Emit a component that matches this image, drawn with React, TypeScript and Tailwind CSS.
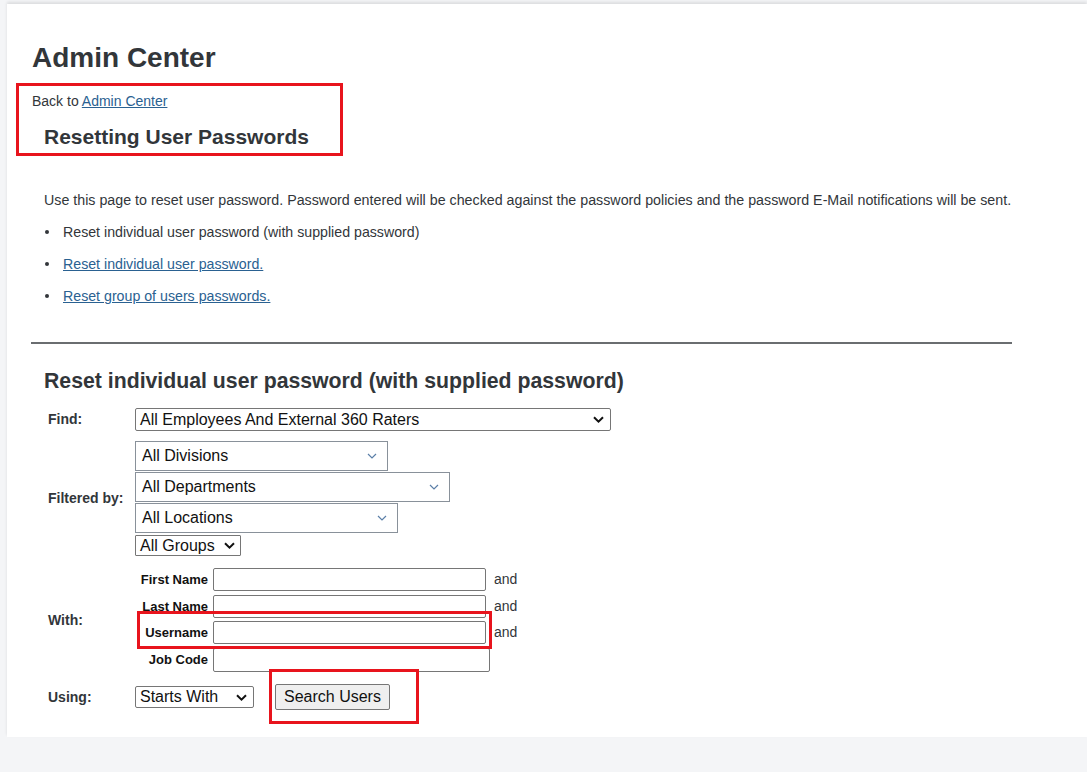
import React from 'react'

const font = { fontFamily: '"Liberation Sans", Arial, sans-serif' }

function Chevron({ light }: { light?: boolean }) {
  return light ? (
    <svg width="10" height="6" viewBox="0 0 10 6" className="shrink-0">
      <path d="M1 1 L5 5 L9 1" fill="none" stroke="#5b7fa8" strokeWidth="1.2" />
    </svg>
  ) : (
    <svg width="11" height="7" viewBox="0 0 11 7" className="shrink-0">
      <path d="M1 1.2 L5.5 5.6 L10 1.2" fill="none" stroke="#111" strokeWidth="2" />
    </svg>
  )
}

function Select({
  label,
  className,
  light,
}: {
  label: string
  className: string
  light?: boolean
}) {
  return (
    <div
      className={`flex items-center justify-between bg-white text-[16px] text-[#111] ${className}`}
    >
      <span className="whitespace-nowrap">{label}</span>
      <Chevron light={light} />
    </div>
  )
}

function Field({
  label,
  className,
  wide,
  and,
}: {
  label: string
  className?: string
  wide?: boolean
  and?: boolean
}) {
  return (
    <div className={`flex items-center ${className ?? ''}`}>
      <div className="w-[78px] pr-[5px] text-right text-[13px] font-bold text-[#111]">{label}</div>
      <div
        className={`rounded-[2px] border border-[#767676] bg-white ${wide ? 'h-[24px] w-[277px]' : 'h-[23px] w-[273px]'}`}
      />
      {and && <span className="ml-[8px] text-[14px] text-[#32363a]">and</span>}
    </div>
  )
}

function Bullet() {
  return (
    <span className="flex w-[19px] pl-[1px]">
      <span className="inline-block h-[4px] w-[4px] rounded-full bg-[#32363a]" />
    </span>
  )
}

export default function App() {
  return (
    <div className="relative h-[772px] bg-[#f4f5f7] pt-[4px] pl-[7px]" style={font}>
      <div className="bg-white pt-[38px] pb-[27px] pl-[25px] shadow-[0_-2px_3px_rgba(0,0,0,0.1)] text-[#32363a]">
        <h1 className="text-[28px] leading-[32px] font-bold">Admin Center</h1>
        <div className="mt-[17px] text-[14px] leading-[20px]">
          Back to{' '}
          <a href="#" className="text-[#2a6191] underline">
            Admin Center
          </a>
        </div>
        <h2 className="mt-[13px] pl-[12px] text-[21px] leading-[26px] font-bold">
          Resetting User Passwords
        </h2>

        <div className="pl-[12px]">
          <p className="mt-[41px] text-[14.25px] leading-[18px]">
            Use this page to reset user password. Password entered will be checked against the
            password policies and the password E-Mail notifications will be sent.
          </p>
          <ul className="mt-[14px] flex flex-col gap-[14px] text-[14.2px] leading-[18px]">
            <li className="flex items-center">
              <Bullet />
              Reset individual user password (with supplied password)
            </li>
            <li className="flex items-center">
              <Bullet />
              <a href="#" className="text-[#2a6191] underline">
                Reset individual user password.
              </a>
            </li>
            <li className="flex items-center">
              <Bullet />
              <a href="#" className="text-[#2a6191] underline">
                Reset group of users passwords.
              </a>
            </li>
          </ul>
        </div>

        <div className="mt-[37px] ml-[-1px] h-[2px] w-[981px] bg-[#6a6d70]" />

        <div className="pl-[12px]">
          <h2 className="mt-[24px] text-[21.25px] leading-[26px] font-bold">
            Reset individual user password (with supplied password)
          </h2>

          <div className="mt-[14px] grid grid-cols-[91px_auto] items-center gap-y-[10px] text-[14px] font-bold">
            <div className="pl-[4px]">Find:</div>
            <Select
              label="All Employees And External 360 Raters"
              className="h-[23px] w-[476px] rounded-[2px] border border-[#767676] pl-[4px] pr-[6px] font-normal"
            />

            <div className="pl-[4px]">Filtered by:</div>
            <div className="flex flex-col items-start font-normal">
              <Select
                label="All Divisions"
                light
                className="h-[30px] w-[253px] border border-[#89919a] pl-[6px] pr-[10px]"
              />
              <Select
                label="All Departments"
                light
                className="mt-[1px] h-[30px] w-[315px] border border-[#89919a] pl-[6px] pr-[10px]"
              />
              <Select
                label="All Locations"
                light
                className="mt-[1px] h-[30px] w-[263px] border border-[#89919a] pl-[6px] pr-[10px]"
              />
              <Select
                label="All Groups"
                className="mt-[2px] h-[21px] w-[106px] rounded-[1px] border border-[#767676] pl-[4px] pr-[5px]"
              />
            </div>

            <div className="pl-[4px]">With:</div>
            <div className="flex flex-col py-[2px] font-normal">
              <Field label="First Name" and />
              <Field label="Last Name" and className="mt-[4px]" />
              <Field label="Username" and className="mt-[3px]" />
              <Field label="Job Code" wide className="mt-[4px]" />
            </div>

            <div className="pl-[4px]">Using:</div>
            <div className="flex items-center gap-[21px] font-normal">
              <Select
                label="Starts With"
                className="h-[22px] w-[119px] rounded-[2px] border border-[#767676] pl-[4px] pr-[6px]"
              />
              <button className="h-[26px] rounded-[2px] border border-[#767676] bg-[#efefef] px-[8px] text-[16px] text-[#111]">
                Search Users
              </button>
            </div>
          </div>
        </div>
      </div>

      {/* annotation boxes */}
      <div className="pointer-events-none absolute left-[16px] top-[83px] h-[73px] w-[327px] border-[3px] border-[#e8141d]" />
      <div className="pointer-events-none absolute left-[137px] top-[611px] h-[38px] w-[355px] border-[3px] border-[#e8141d]" />
      <div className="pointer-events-none absolute left-[269px] top-[669px] h-[55px] w-[150px] border-[3px] border-[#e8141d]" />
    </div>
  )
}
